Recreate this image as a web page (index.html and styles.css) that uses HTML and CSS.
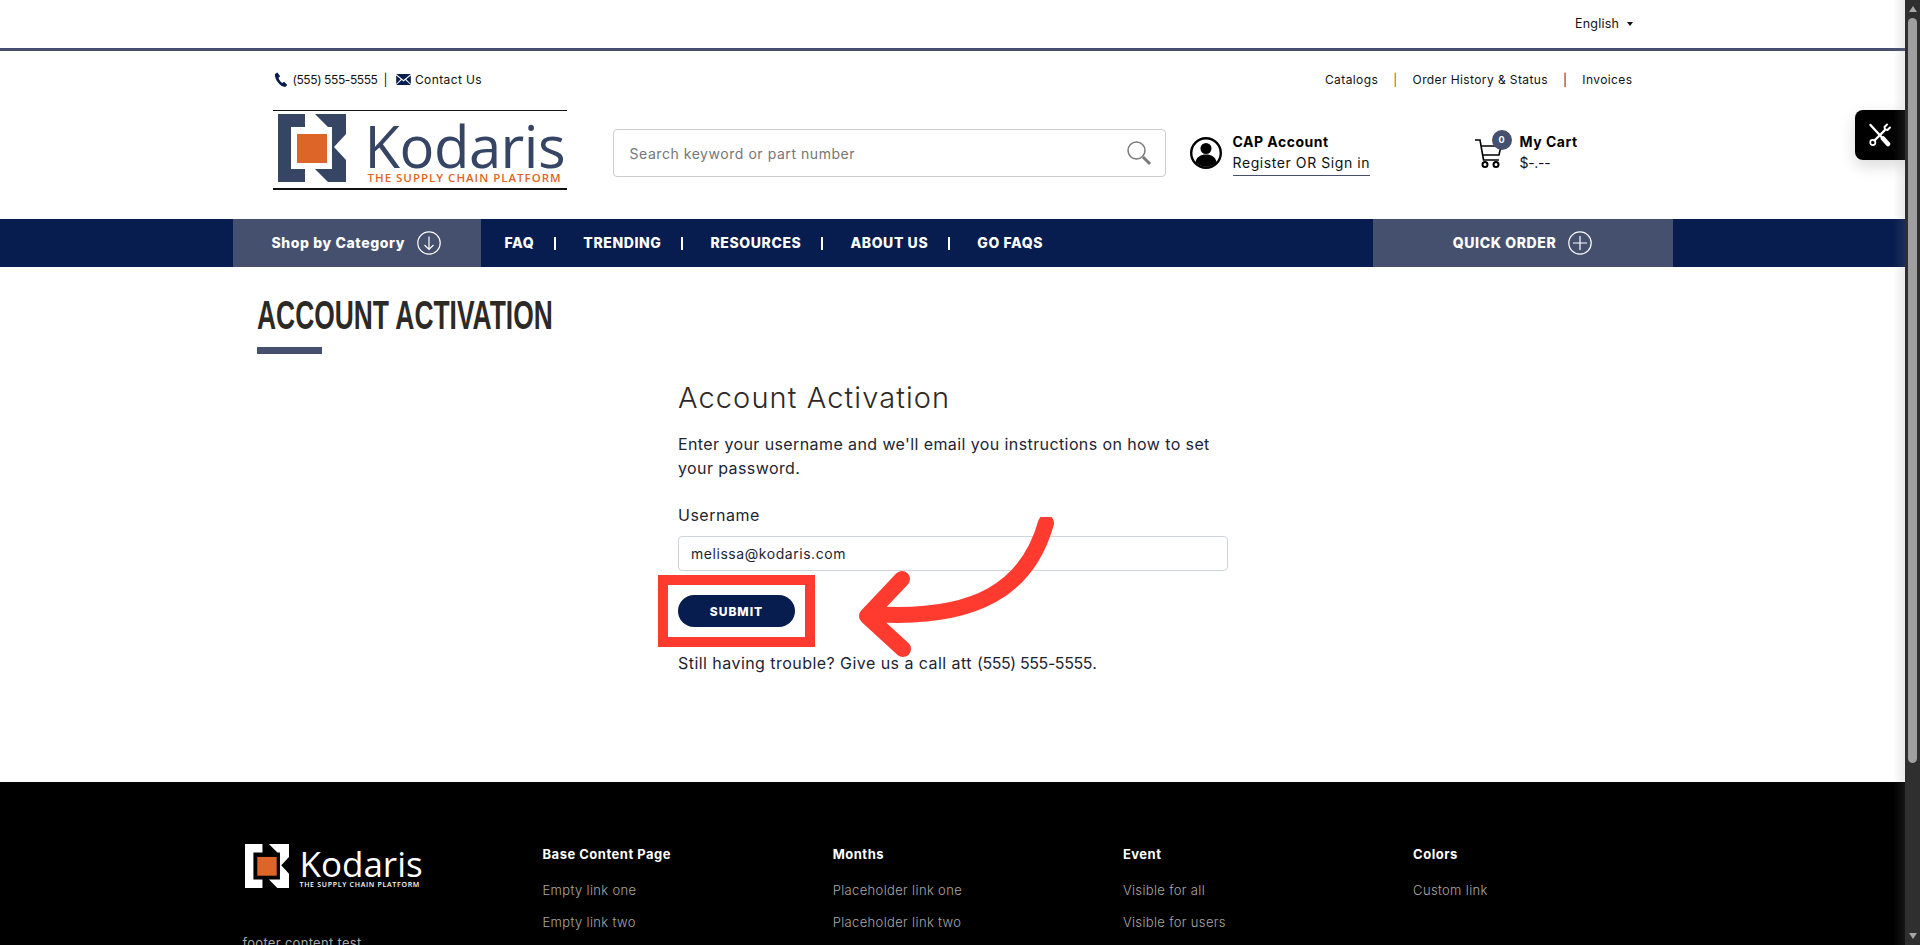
FILE: index.html
```html
<!DOCTYPE html>
<html>
<head>
    <link rel="stylesheet" href="styles.css">
</head>
<body>
    <div class="page">
        <div class="topBar"><span class="langSelect">English <i class="caret"></i></span></div>

        <header class="siteHeader">
            <div class="utilRow">
                <div class="utilLeft">
                    <svg class="utilIcon" viewBox="0 0 16 16" width="15" height="15"><path fill="#081d4f" d="M1 2.2 3.6.6l3 4-1.8 1.6c.5 2 2 4.300 4 5.500l1.900-1.200 3.500 3.300-2.300 2.100C6.700 16 .6 8.500 1 2.200z"/></svg>
                    <span class="phoneNum">(555) 555-5555</span>
                    <span class="pipe">|</span>
                    <svg class="utilIcon" viewBox="0 0 16 12" width="15" height="11"><path fill="#081d4f" d="M0 0h16L8 6.500zM0 1.500v9.300l5-5.200zM16 1.500v9.300l-5-5.200zM6 6.500l2 1.600 2-1.600 6 5.500H0z"/></svg>
                    <span>Contact Us</span>
                </div>
                <div class="utilRight">
                    <span>Catalogs</span><span class="pipe gold">|</span>
                    <span>Order History &amp; Status</span><span class="pipe">|</span>
                    <span>Invoices</span>
                </div>
            </div>

            <div class="mainRow">
                <div class="logo">
                    <svg class="logoMark" viewBox="0 0 68 68" width="68" height="68">
                        <path fill="#364564" d="M0 0H27V13H13V55H27V68H0ZM37 0L50 13H54V55H37L50 68H68V46L56 33L68 20V0Z"/>
                        <rect fill="#dd6527" x="19" y="20" width="30" height="29"/>
                    </svg>
                    <div class="logoText">
                        <div class="logoName">Kodaris</div>
                        <div class="logoTag">THE SUPPLY CHAIN PLATFORM</div>
                    </div>
                </div>

                <div class="searchBox">
                    <span class="searchHint">Search keyword or part number</span>
                    <svg viewBox="0 0 26 26" width="26" height="26" fill="none" stroke="#7a7a7a"><circle cx="10.500" cy="10.500" r="8.500" stroke-width="1.500"/><path d="M17 17l7 7" stroke-width="3"/></svg>
                </div>

                <div class="accountBox">
                    <svg viewBox="0 0 32 32" width="32" height="32"><circle cx="16" cy="16" r="14.800" fill="#fff" stroke="#000" stroke-width="2.400"/><circle cx="16" cy="11.500" r="5.500"/><path d="M5.500 25c1-5 5-7.500 10.500-7.500S25.500 20 26.500 25c-2.500 3-6.500 4.800-10.500 4.800S8 28 5.500 25z"/></svg>
                    <div class="accountText">
                        <div class="strongLine">CAP Account</div>
                        <div class="signLine">Register OR Sign in</div>
                    </div>
                </div>

                <div class="cartBox">
                    <div class="cartIcon">
                        <svg viewBox="0 0 28 29" width="28" height="29" fill="none" stroke="#000" stroke-width="1.600"><path d="M0 1h5l3.500 20h15.500M6 7h20l-2 9H7.500"/><circle cx="10" cy="25.500" r="2.500" stroke-width="2"/><circle cx="21" cy="25.500" r="2.500" stroke-width="2"/></svg>
                        <span class="cartBadge">0</span>
                    </div>
                    <div class="cartText">
                        <div class="strongLine">My Cart</div>
                        <div class="priceLine">$-.--</div>
                    </div>
                </div>
            </div>
        </header>

        <nav class="navBar">
            <div class="navInner">
                <div class="shopBtn">
                    <span>Shop by Category</span>
                    <svg viewBox="0 0 24 24" width="24" height="24" fill="none" stroke="#fff" stroke-width="1.200"><circle cx="12" cy="12" r="11.200"/><path d="M12 5.500v13M7.500 14l4.500 4.500 4.500-4.500"/></svg>
                </div>
                <div class="navLinks">
                    <span>FAQ</span><i class="navSep"></i>
                    <span>TRENDING</span><i class="navSep"></i>
                    <span>RESOURCES</span><i class="navSep"></i>
                    <span>ABOUT US</span><i class="navSep"></i>
                    <span>GO FAQS</span>
                </div>
                <div class="quickBtn">
                    <span>QUICK ORDER</span>
                    <svg viewBox="0 0 24 24" width="24" height="24" fill="none" stroke="#fff" stroke-width="1.200"><circle cx="12" cy="12" r="11.200"/><path d="M12 5v14M5 12h14"/></svg>
                </div>
            </div>
        </nav>

        <main class="content">
            <h1 class="pageTitle">ACCOUNT ACTIVATION</h1>
            <div class="titleBar"></div>

            <div class="activationForm">
                <h2>Account Activation</h2>
                <p class="intro">Enter your username and we'll email you instructions on how to set your password.</p>
                <label class="fieldLabel">Username</label>
                <div class="fieldInput">melissa@kodaris.com</div>
                <button class="submitBtn">SUBMIT</button>
                <p class="helpText">Still having trouble? Give us a call att <span class="phoneNum">(555) 555-5555</span>.</p>

                <div class="redBox"></div>
                <svg class="redArrow" viewBox="0 0 200 145" width="200" height="145" fill="none" stroke="#ff3b30" stroke-width="16" stroke-linecap="round" stroke-linejoin="round">
                    <path d="M190 6C172 70 122 104 16 97"/>
                    <path d="M46 62L11 99L47 132"/>
                </svg>
            </div>
        </main>

        <footer class="siteFooter">
            <div class="footerGrid">
                <div class="footerBrand">
                    <div class="footerLogo">
                        <svg viewBox="0 0 68 68" width="44" height="44">
                            <path fill="#fff" d="M0 0H27V13H13V55H27V68H0ZM37 0L50 13H54V55H37L50 68H68V46L56 33L68 20V0Z"/>
                            <rect fill="#dd6527" x="19" y="20" width="30" height="29"/>
                        </svg>
                        <div>
                            <div class="footerName">Kodaris</div>
                            <div class="footerTag">THE SUPPLY CHAIN PLATFORM</div>
                        </div>
                    </div>
                    <div class="footerNote">footer content test</div>
                </div>
                <div class="footerCol">
                    <h4>Base Content Page</h4>
                    <a>Empty link one</a>
                    <a>Empty link two</a>
                </div>
                <div class="footerCol">
                    <h4>Months</h4>
                    <a>Placeholder link one</a>
                    <a>Placeholder link two</a>
                </div>
                <div class="footerCol">
                    <h4>Event</h4>
                    <a>Visible for all</a>
                    <a>Visible for users</a>
                </div>
                <div class="footerCol">
                    <h4>Colors</h4>
                    <a>Custom link</a>
                </div>
            </div>
        </footer>

        <div class="toolWidget">
            <svg viewBox="0 0 24 24" width="24" height="24" fill="none" stroke="#fff" stroke-linecap="round" stroke-linejoin="round"><path d="M2.500 2L13.500 14" stroke-width="2.400"/><path d="M6.500 17.500L16.500 7.500" stroke-width="2.400"/><path d="M22 4.500l-2.500 2.500-2.500-.5-.5-2.500L19 1.500" stroke-width="2"/><circle cx="4.800" cy="19.500" r="2.600" stroke-width="1.700"/><path d="M15 15.500l5 5.500" stroke-width="4.600"/></svg>
        </div>
        <div class="scrollShade"></div>
    </div>

    <div class="scrollBar">
        <i class="arrowUp"></i>
        <div class="scrollThumb"></div>
        <i class="arrowDown"></i>
    </div>
</body>
</html>
```

FILE: styles.css
```css
html, body {
    margin: 0;
    height: 945px;
    overflow: hidden;
}
body {
    display: flex;
    font-family: Inter, "Open Sans", Arial, sans-serif;
    font-size: 16px;
    color: #1c2533;
    background-color: white;
}
.page {
    position: relative;
    flex: 1;
    min-width: 0;
    height: 945px;
    overflow: hidden;
}
.phoneNum {
    letter-spacing: -0.400px;
}

/* top bar */
.topBar {
    height: 48px;
    border-bottom: 3px solid #45506f;
    display: flex;
    justify-content: flex-end;
    align-items: center;
    padding-right: 272px;
}
.langSelect {
    font-size: 12.500px;
    letter-spacing: 0.250px;
    color: #111;
    margin-top: -1px;
}
.caret {
    display: inline-block;
    margin-left: 4px;
    vertical-align: 2px;
    border-top: 4px solid #111;
    border-left: 3px solid transparent;
    border-right: 3px solid transparent;
}

/* header */
.siteHeader {
    width: 1360px;
    margin: 0 auto;
    padding-top: 19px;
}
.utilRow {
    height: 18px;
    display: flex;
    justify-content: space-between;
    align-items: center;
    font-size: 12px;
    letter-spacing: 0.400px;
    color: #111;
}
.utilLeft, .utilRight {
    display: flex;
    align-items: center;
}
.utilIcon {
    margin: 0 4px 0 1px;
}
.utilLeft .pipe {
    margin: 0 7px 0 6px;
}
.utilRight .pipe {
    margin: 0 15px;
    color: #081d4f;
}
.utilRight .pipe.gold {
    color: #8a6a1f;
}
.mainRow {
    display: flex;
    align-items: center;
    height: 80px;
    margin-top: 22px;
}
.logo {
    width: 294px;
    height: 80px;
    box-sizing: border-box;
    border-top: 1px solid #111;
    border-bottom: 2px solid #111;
    padding: 3px 0 0 5px;
    display: flex;
    flex-shrink: 0;
}
.logoMark {
    flex-shrink: 0;
}
.logoText {
    margin-left: 21px;
}
.logoName {
    font-family: "Open Sans", sans-serif;
    font-size: 58px;
    font-weight: 500;
    line-height: 50px;
    letter-spacing: -0.500px;
    color: #364564;
    margin: 7px 0 0 -2px;
}
.logoTag {
    font-family: "Open Sans", sans-serif;
    font-size: 11.500px;
    font-weight: 600;
    line-height: 11px;
    letter-spacing: 1px;
    color: #dd6527;
    white-space: nowrap;
    margin: 1px 0 0 1px;
}
.searchBox {
    width: 553px;
    height: 48px;
    box-sizing: border-box;
    margin: 6px 0 0 46px;
    border: 1px solid #ccc;
    border-radius: 4px;
    padding: 0 13px 0 16px;
    display: flex;
    align-items: center;
    justify-content: space-between;
    flex-shrink: 0;
}
.searchHint {
    font-size: 14px;
    letter-spacing: 0.550px;
    color: #767676;
}
.accountBox {
    width: 285px;
    box-sizing: border-box;
    margin: 6px 0 0 24px;
    display: flex;
    align-items: center;
    gap: 11px;
    flex-shrink: 0;
}
.accountText, .cartText {
    padding-top: 1px;
}
.strongLine {
    font-size: 14px;
    font-weight: 700;
    letter-spacing: 0.500px;
    line-height: 20px;
    color: black;
}
.signLine {
    font-size: 14px;
    letter-spacing: 0.580px;
    line-height: 20px;
    color: #111;
    border-bottom: 1px solid #45506f;
    padding-bottom: 2px;
    margin-top: 1px;
}
.cartBox {
    display: flex;
    align-items: center;
    gap: 17px;
    margin-top: 6px;
}
.cartIcon {
    position: relative;
    width: 28px;
    height: 29px;
}
.cartBadge {
    position: absolute;
    top: -9px;
    left: 17px;
    width: 20px;
    height: 20px;
    border-radius: 50%;
    background-color: #45506f;
    color: white;
    font-size: 9px;
    font-weight: 700;
    line-height: 20px;
    text-align: center;
}
.priceLine {
    font-size: 14px;
    line-height: 20px;
    letter-spacing: -0.300px;
    margin-top: 1px;
    padding-bottom: 2px;
    color: #111;
}

/* nav */
.navBar {
    margin-top: 29px;
    background-color: #081d4f;
    height: 48px;
}
.navInner {
    width: 1440px;
    height: 48px;
    margin: 0 auto;
    display: flex;
    color: white;
    font-weight: 800;
    font-size: 14px;
    letter-spacing: 0.600px;
}
.navInner span {
    margin-top: -2px;
}
.shopBtn {
    width: 248px;
    box-sizing: border-box;
    padding-left: 39px;
    background-color: #45506f;
    display: flex;
    align-items: center;
    gap: 12px;
}
.navLinks {
    flex: 1;
    padding-left: 24px;
    display: flex;
    align-items: center;
}
.navSep {
    width: 2px;
    height: 13px;
    background-color: white;
    margin: 0 27px 0 20px;
}
.quickBtn {
    width: 300px;
    background-color: #45506f;
    display: flex;
    align-items: center;
    justify-content: center;
    gap: 12px;
}

/* content */
.content {
    padding: 28px 0 107px 257px;
    position: relative;
}
.pageTitle {
    margin: 0;
    font-family: "Liberation Sans", sans-serif;
    font-size: 40px;
    line-height: 40px;
    font-weight: 700;
    color: #2d2926;
    white-space: nowrap;
    transform: scaleX(0.66);
    transform-origin: left center;
}
.titleBar {
    width: 65px;
    height: 7px;
    background-color: #45506f;
    margin-top: 12px;
}
.activationForm {
    position: relative;
    width: 550px;
    margin: 27px 0 0 421px;
}
.activationForm h2 {
    margin: 0;
    font-size: 29px;
    line-height: 34px;
    font-weight: 300;
    letter-spacing: 1.100px;
    color: #2d2926;
}
.intro {
    margin: 17px 0 0;
    line-height: 24px;
    letter-spacing: 0.400px;
}
.fieldLabel {
    display: block;
    margin-top: 23px;
    line-height: 24px;
    letter-spacing: 0.500px;
}
.fieldInput {
    margin-top: 9px;
    height: 35px;
    box-sizing: border-box;
    border: 1px solid #ced4da;
    border-radius: 4px;
    padding: 0 12px;
    font-size: 14px;
    letter-spacing: 0.550px;
    line-height: 33px;
}
.submitBtn {
    display: block;
    margin-top: 24px;
    width: 117px;
    height: 32px;
    border: none;
    border-radius: 16px;
    background-color: #081d4f;
    color: white;
    font-family: Inter, sans-serif;
    font-size: 12px;
    font-weight: 800;
    letter-spacing: 1px;
}
.helpText {
    margin: 24px 0 0;
    line-height: 24px;
    letter-spacing: 0.450px;
}

/* annotation drawn over the form */
.redBox {
    position: absolute;
    left: -20px;
    top: 194px;
    width: 137px;
    height: 52px;
    border: 10px solid #ff3b30;
}
.redArrow {
    position: absolute;
    left: 178px;
    top: 136px;
}

/* footer */
.siteFooter {
    background-color: black;
    height: 300px;
    padding-top: 61px;
}
.footerGrid {
    width: 1440px;
    margin: 0 auto;
    box-sizing: border-box;
    padding-left: 10px;
    display: grid;
    grid-template-columns: 300px repeat(4, 290.200px);
}
.footerLogo {
    display: flex;
    gap: 11px;
    margin-left: 2px;
    height: 44px;
    margin-top: 1px;
}
.footerName {
    font-family: "Open Sans", sans-serif;
    font-size: 35px;
    font-weight: 500;
    line-height: 34px;
    color: white;
    margin-top: 3px;
}
.footerTag {
    font-family: "Open Sans", sans-serif;
    font-size: 7px;
    line-height: 8px;
    letter-spacing: 0.700px;
    color: white;
    white-space: nowrap;
    font-weight: 600;
}
.footerNote {
    margin-top: 45px;
    font-size: 13px;
    line-height: 20px;
    letter-spacing: 0.300px;
    color: #aaa;
}
.footerCol h4 {
    margin: 1px 0 16px;
    font-size: 13px;
    line-height: 20px;
    font-weight: 700;
    letter-spacing: 0.500px;
    color: white;
}
.footerCol a {
    display: block;
    font-size: 13px;
    font-weight: 300;
    line-height: 20px;
    letter-spacing: 0.350px;
    margin-bottom: 12px;
    color: #a8a8a8;
}

/* floating tools button */
.toolWidget {
    position: absolute;
    right: 0;
    top: 110px;
    width: 50px;
    height: 50px;
    background-color: black;
    border-radius: 8px 0 0 8px;
    display: flex;
    align-items: center;
    justify-content: center;
    box-shadow: 0 6px 16px rgba(0, 0, 0, 0.15);
}
.scrollShade {
    position: absolute;
    right: 0;
    top: 0;
    width: 12px;
    height: 945px;
    background: linear-gradient(to right, rgba(128, 128, 128, 0), rgba(128, 128, 128, 0.16));
}

/* browser scrollbar */
.scrollBar {
    width: 15px;
    height: 945px;
    background-color: #2f2f2f;
    display: flex;
    flex-direction: column;
    align-items: center;
    flex-shrink: 0;
}
.arrowUp {
    margin-top: 6px;
    border-bottom: 6px solid #a6a6a6;
    border-left: 4px solid transparent;
    border-right: 4px solid transparent;
}
.scrollThumb {
    width: 9px;
    height: 745px;
    margin-top: 6px;
    background-color: #9f9f9f;
    border-radius: 5px;
}
.arrowDown {
    margin-top: auto;
    margin-bottom: 6px;
    border-top: 6px solid #a6a6a6;
    border-left: 4px solid transparent;
    border-right: 4px solid transparent;
}
```
